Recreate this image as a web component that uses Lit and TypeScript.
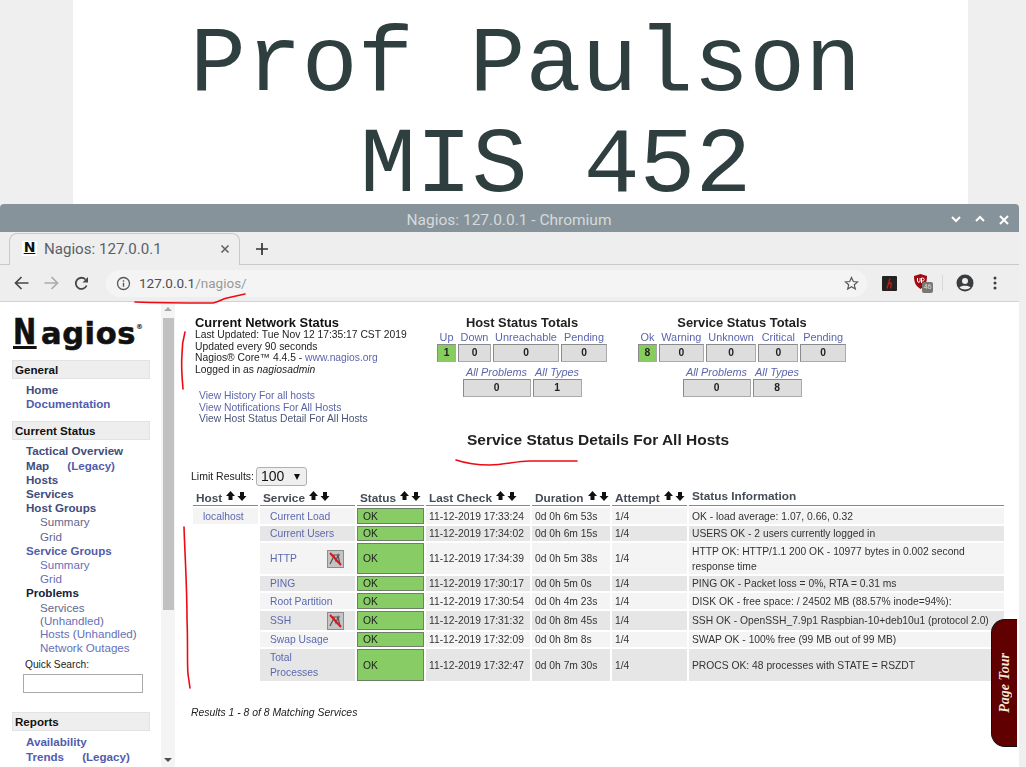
import {LitElement, css, html, svg} from 'lit';
import {customElement} from 'lit/decorators.js';

interface ServiceRow {
  name: string;
  h: number;
  check: string;
  duration: string;
  info: string;
  noted?: boolean;
}

const ROWS: ServiceRow[] = [
  {name: 'Current Load', h: 16, check: '17:33:24', duration: '0d 0h 6m 53s', info: 'OK - load average: 1.07, 0.66, 0.32'},
  {name: 'Current Users', h: 15, check: '17:34:02', duration: '0d 0h 6m 15s', info: 'USERS OK - 2 users currently logged in'},
  {name: 'HTTP', h: 31, check: '17:34:39', duration: '0d 0h 5m 38s', info: 'HTTP OK: HTTP/1.1 200 OK - 10977 bytes in 0.002 second response time', noted: true},
  {name: 'PING', h: 15, check: '17:30:17', duration: '0d 0h 5m 0s', info: 'PING OK - Packet loss = 0%, RTA = 0.31 ms'},
  {name: 'Root Partition', h: 16, check: '17:30:54', duration: '0d 0h 4m 23s', info: 'DISK OK - free space: / 24502 MB (88.57% inode=94%):'},
  {name: 'SSH', h: 19, check: '17:31:32', duration: '0d 0h 8m 45s', info: 'SSH OK - OpenSSH_7.9p1 Raspbian-10+deb10u1 (protocol 2.0)', noted: true},
  {name: 'Swap Usage', h: 15, check: '17:32:09', duration: '0d 0h 8m 8s', info: 'SWAP OK - 100% free (99 MB out of 99 MB)'},
  {name: 'Total Processes', h: 32, check: '17:32:47', duration: '0d 0h 7m 30s', info: 'PROCS OK: 48 processes with STATE = RSZDT'},
];

const sortArrows = html`<svg class="sort" width="21" height="10" viewBox="0 0 21 10">
  <path d="M4.5 0 9 5H6.5v4h-4V5H0z" fill="#111"/>
  <path d="M12 1h4v4h2.5L14 10 9.5 5H12z" fill="#111" transform="translate(2 0)"/>
</svg>`;

const noteIcon = html`<svg class="note" width="17" height="18" viewBox="0 0 17 18">
  <rect x=".5" y=".5" width="16" height="17" fill="#c4c4c4" stroke="#8c8c8c"/>
  <path d="M3 14 7 6l2 5 2-6 2 9M4 5h9" fill="none" stroke="#555" stroke-width="1.2"/>
  <path d="M3 3l11 12" stroke="#e0141c" stroke-width="2"/>
</svg>`;

const strokes = svg`
  <g fill="none" stroke="#ee0a14" stroke-width="1.6" stroke-linecap="round" stroke-linejoin="round">
    <path d="M135 302c25 1 55 1 78 1 6-1 9-4 14-5l18-4"/>
    <path d="M185 332c-2 7-3 14-3 22-1 12 0 24 1 35"/>
    <path d="M456 460c12 4 22 5 34 5 14 0 26-4 40-4l47 0"/>
    <path d="M184 527c1 30 3 60 3 92 1 25 0 45 1 55l2 14"/>
  </g>`;

@customElement('app-root')
export class AppRoot extends LitElement {
  static styles = css`
    :host {
      display: block;
      position: relative;
      width: 1026px;
      height: 767px;
      overflow: hidden;
      background: #efefef;
      font-family: 'Liberation Sans', Arial, sans-serif;
    }
    .slide {
      width: 895px;
      height: 204px;
      margin-left: 73px;
      background: #fff;
      overflow: hidden;
      font-family: 'Liberation Mono', monospace;
      font-size: 93.2px;
      line-height: 76px;
      color: #2f3e3f;
    }
    .slide-one { padding: 27px 0 25px 117px; }
    .slide-two { padding-left: 287px; }
    .window {
      width: 1019px;
      height: 563px;
      display: flex;
      flex-direction: column;
      border-radius: 4px 4px 0 0;
      background: #eee;
      overflow: hidden;
      font-family: Roboto, sans-serif;
      filter: blur(.3px);
    }
    .titlebar {
      height: 28px;
      flex: none;
      box-sizing: border-box;
      display: flex;
      align-items: center;
      justify-content: center;
      position: relative;
      background: #87939a;
      color: #d5dadc;
      font-size: 15.5px;
      padding: 3px 1px 0 0;
    }
    .winctl {
      position: absolute;
      right: 10px;
      top: 11px;
      display: flex;
      gap: 14px;
    }
    .tabstrip {
      height: 33px;
      flex: none;
      display: flex;
      align-items: flex-end;
      box-sizing: border-box;
      padding-left: 9px;
      background: linear-gradient(#eee 32px, #c9c9c9 32px);
    }
    .tab {
      width: 231px;
      height: 32px;
      box-sizing: border-box;
      display: flex;
      align-items: center;
      gap: 7px;
      padding: 0 9px 2px 12px;
      background: #eee;
      border: 1px solid #c9c9c9;
      border-bottom: none;
      border-radius: 8px 8px 0 0;
      color: #5c6166;
      font-size: 15.1px;
    }
    .favicon {
      width: 15px;
      height: 15px;
      flex: none;
      background: #fff;
      color: #111;
      font: 700 14px/13px 'DejaVu Sans', sans-serif;
      text-align: center;
      text-decoration: underline;
    }
    .tab-title { flex: 1; }
    .plus { margin: 0 0 10px 16px; }
    .toolbar {
      height: 37px;
      flex: none;
      display: flex;
      align-items: center;
      box-sizing: border-box;
      border-bottom: 1px solid #d2d2d2;
      padding-left: 14px;
    }
    .nav { display: flex; gap: 15px; align-items: center; }
    .omnibox {
      width: 761px;
      height: 27px;
      margin-left: 17px;
      box-sizing: border-box;
      display: flex;
      align-items: center;
      padding: 0 8px 0 10px;
      background: #f4f4f4;
      border-radius: 14px;
      font-size: 13.5px;
      color: #4a4f54;
    }
    .url-path { color: #999; }
    .omnibox .grow { flex: 1; margin-left: 8px; }
    .exts { display: flex; align-items: center; margin-left: 15px; }
    .ext-sep { width: 1px; height: 16px; background: #d8d8d8; margin: 0 13px 0 9px; }
    .ublock { position: relative; width: 20px; height: 20px; margin-left: 16px; }
    .ublock span {
      position: absolute;
      left: 9px;
      top: 9px;
      width: 11px;
      height: 11px;
      border-radius: 2px;
      background: #777;
      color: #ddd;
      font: 7px/11px Roboto, sans-serif;
      text-align: center;
    }
    .dots { margin-left: 19px; }
    .page {
      flex: 1;
      display: flex;
      min-height: 0;
      background: #fff;
    }
    .sidebar {
      width: 161px;
      flex: none;
      box-sizing: border-box;
      padding: 13px 0 0 12px;
      overflow: hidden;
      font-family: 'Liberation Sans', Arial, sans-serif;
      font-size: 11.6px;
      line-height: 14.2px;
    }
    .logo {
      height: 45px;
      box-sizing: border-box;
      color: #111;
      font: 700 30.5px/34px 'DejaVu Sans', sans-serif;
      letter-spacing: .6px;
      -webkit-text-stroke: .6px #111;
      margin-left: 1px;
      white-space: nowrap;
    }
    .logo u {
      display: inline-block;
      width: 28px;
      font-size: 36px;
      transform: scaleX(.77);
      transform-origin: left;
      text-underline-offset: 2px;
      text-decoration-thickness: 3px;
    }
    .logo sup { font-size: 7px; line-height: 0; letter-spacing: 0; -webkit-text-stroke: 0; vertical-align: 15px; }
    .side-head {
      width: 138px;
      height: 19px;
      box-sizing: border-box;
      padding-left: 2px;
      background: #eee;
      border: 1px solid #e2e2e2;
      color: #111;
      font-weight: 700;
      line-height: 18px;
      margin-bottom: 4px;
    }
    .side-list { margin-bottom: 10px; }
    .item { padding-left: 14px; font-weight: 700; color: #414c7c; white-space: pre; }
    .item.fresh { color: #515cae; }
    .item.black { color: #14203a; }
    .legacy { margin-left: 2px; }
    .sub { padding-left: 28px; color: #5f678f; }
    .sub.fresh, .fresh-link { color: #6670b8; }
    .sub.tight { line-height: 13.4px; }
    .item .fresh-link { font-weight: 700; color: #515cae; }
    .search-label { display: block; margin: 4px 0 2px 13px; color: #222; font-size: 10.2px; }
    .search {
      display: block;
      width: 120px;
      height: 19px;
      margin: 0 0 19px 11px;
      box-sizing: border-box;
      border: 1px solid #aaa;
      background: #fff;
    }
    .scrollbar {
      width: 14px;
      flex: none;
      display: flex;
      flex-direction: column;
      align-items: center;
      background: #f4f4f4;
    }
    .thumb {
      width: 11px;
      height: 292px;
      margin: 7px 0 auto;
      background: #c1c1c1;
    }
    .arrow { width: 0; height: 0; border: 4px solid transparent; }
    .arrow.up { border-bottom-color: #a8a8a8; border-top: none; margin-top: 5px; }
    .arrow.down { border-top-color: #505050; border-bottom: none; margin-bottom: 5px; }
    .main {
      flex: 1;
      min-width: 0;
      box-sizing: border-box;
      padding: 14px 0 0 16px;
      font-family: 'Liberation Sans', Arial, sans-serif;
      font-size: 10.3px;
      color: #222;
    }
    .main-top { display: flex; height: 116px; }
    .net { width: 246px; flex: none; padding-left: 4px; box-sizing: border-box; line-height: 11.7px; }
    .net-title { font-size: 12.9px; font-weight: 700; line-height: 13px; color: #111; }
    .net a, .links a { color: #5c65ab; }
    .links { margin: 14px 0 0 4px; line-height: 11.7px; }
    .links .dark { color: #4a5478; }
    .totals { flex: none; display: flex; flex-direction: column; align-items: center; }
    .totals.host { width: 170px; }
    .totals.service { width: 208px; margin-left: 31px; }
    .totals-title { font-size: 12.9px; font-weight: 700; line-height: 14px; color: #222; }
    .total-row { display: flex; gap: 2px; width: 100%; justify-content: center; }
    .total-cell { display: flex; flex-direction: column; align-items: stretch; }
    .total-cell .label {
      height: 14px;
      line-height: 14px;
      text-align: center;
      color: #5c65ab;
      white-space: nowrap;
      font-size: 10.9px;
    }
    .total-row.second { margin-top: 3px; }
    .total-row.second .label { font-style: italic; height: 14px; line-height: 14px; }
    .total-box {
      height: 18px;
      box-sizing: border-box;
      border: 1px solid #888;
      border-color: #8a8a8a #aaa #aaa #8a8a8a;
      background: #ddd;
      text-align: center;
      font-weight: 700;
      line-height: 16px;
      color: #222;
    }
    .total-box.good { background: #88cc5f; }
    .details-title {
      text-align: center;
      font-size: 15.5px;
      font-weight: 700;
      color: #222;
      width: 814px;
      line-height: 16px;
      margin-bottom: 19px;
    }
    .limit { display: flex; align-items: flex-start; gap: 2px; height: 21px; font-size: 10.5px; line-height: 19px; }
    .select {
      width: 51px;
      height: 19px;
      box-sizing: border-box;
      display: flex;
      align-items: center;
      justify-content: space-between;
      padding: 0 6px 0 4px;
      background: #efefef;
      border: 1px solid #b0b0b0;
      border-radius: 3px;
      color: #111;
      font-size: 14px;
    }
    .select i { width: 0; height: 0; border: 3.5px solid transparent; border-top: 6px solid #111; border-bottom: none; }
    table { border-collapse: separate; border-spacing: 2px; table-layout: fixed; width: 815px; }
    th {
      height: 16px;
      padding: 0 0 0 3px;
      box-sizing: border-box;
      border-bottom: 1px solid #888;
      text-align: left;
      white-space: nowrap;
      font-size: 11.8px;
      font-weight: 700;
      color: #444c55;
    }
    th.info-head { vertical-align: top; line-height: 13px; }
    .sort { margin-left: 4px; vertical-align: 1px; }
    td { padding: 0 0 0 3px; line-height: 15px; color: #333; font-size: 10.3px; }
    tr.odd td.fill { background: #f4f4f4; }
    tr.even td.fill { background: #e6e6e6; }
    td.host { padding-left: 10px; }
    td a { color: #5c68b0; }
    td.service { padding-left: 10px; }
    .service-box { display: flex; align-items: center; justify-content: space-between; padding-right: 11px; }
    .service-name { width: 66px; }
    td.ok {
      padding-left: 5px;
      background: #88cc66;
      border: 1px solid #6d7f66;
      box-sizing: border-box;
      color: #222;
      line-height: 13px;
    }
    .note { display: block; }
    .results { margin: 24px 0 0 0; font-style: italic; font-size: 10.4px; color: #222; }
    .page-tour {
      position: absolute;
      left: 991px;
      top: 619px;
      width: 26px;
      height: 128px;
      box-sizing: border-box;
      border: 1px solid #111;
      border-right: none;
      border-radius: 14px 0 0 14px;
      background: #600000;
      display: flex;
      align-items: center;
      justify-content: center;
      color: #f4e8d8;
      font: italic 700 14px 'Liberation Serif', serif;
    }
    .page-tour span { writing-mode: vertical-rl; transform: rotate(180deg); }
    .pen { position: absolute; left: 0; top: 0; pointer-events: none; }
    a { text-decoration: none; }
  `;

  private renderTotals(cls: string, title: string, top: [string, string, number][], bottom: [string, string, number][]) {
    const cell = (c: [string, string, number], good: boolean) => html`
      <div class="total-cell" style="width:${c[2]}px">
        <div class="label">${c[0]}</div>
        <div class="total-box ${good ? 'good' : ''}">${c[1]}</div>
      </div>`;
    return html`
      <div class="totals ${cls}">
        <div class="totals-title">${title}</div>
        <div class="total-row">${top.map((c, i) => cell(c, i === 0))}</div>
        <div class="total-row second">${bottom.map((c) => cell(c, false))}</div>
      </div>`;
  }

  private renderSidebar() {
    return html`
      <nav class="sidebar">
        <div class="logo"><u>N</u>agios<sup>®</sup></div>
        <div class="side-head">General</div>
        <div class="side-list">
          <div class="item">Home</div>
          <div class="item fresh">Documentation</div>
        </div>
        <div class="side-head">Current Status</div>
        <div>
          <div class="item">Tactical Overview</div>
          <div class="item">Map     <span class="fresh-link legacy">(Legacy)</span></div>
          <div class="item">Hosts</div>
          <div class="item">Services</div>
          <div class="item">Host Groups</div>
          <div class="sub">Summary</div>
          <div class="sub">Grid</div>
          <div class="item fresh">Service Groups</div>
          <div class="sub fresh">Summary</div>
          <div class="sub fresh">Grid</div>
          <div class="item black">Problems</div>
          <div class="sub tight">Services</div>
          <div class="sub tight">(<span class="fresh-link">Unhandled</span>)</div>
          <div class="sub tight"><span class="fresh-link">Hosts</span> (<span class="fresh-link">Unhandled</span>)</div>
          <div class="sub tight fresh">Network Outages</div>
        </div>
        <label class="search-label">Quick Search:</label>
        <input class="search" type="text" />
        <div class="side-head">Reports</div>
        <div>
          <div class="item fresh">Availability</div>
          <div class="item fresh">Trends     <span class="legacy">(Legacy)</span></div>
          <div class="item fresh">Alerts</div>
        </div>
      </nav>`;
  }

  private renderTable() {
    const heads = ['Host', 'Service', 'Status', 'Last Check', 'Duration', 'Attempt'];
    return html`
      <table>
        <colgroup>
          ${[65, 95, 67, 104, 78, 75, 315].map((w) => html`<col style="width:${w}px" />`)}
        </colgroup>
        <thead>
          <tr>
            ${heads.map((h) => html`<th>${h}${sortArrows}</th>`)}
            <th class="info-head">Status Information</th>
          </tr>
        </thead>
        <tbody>
          ${ROWS.map((r, i) => html`
            <tr class=${i % 2 ? 'even' : 'odd'} style="height:${r.h}px">
              ${i === 0
                ? html`<td class="host fill"><a>localhost</a></td>`
                : html`<td class="host"></td>`}
              <td class="service fill">
                <div class="service-box">
                  <a class=${r.noted ? '' : 'service-name'}>${r.name}</a>
                  ${r.noted ? noteIcon : ''}
                </div>
              </td>
              <td class="ok">OK</td>
              <td class="fill">11-12-2019 ${r.check}</td>
              <td class="fill">${r.duration}</td>
              <td class="fill">1/4</td>
              <td class="fill">${r.info}</td>
            </tr>`)}
        </tbody>
      </table>`;
  }

  render() {
    return html`
      <div class="slide">
        <div class="slide-one">Prof Paulson</div>
        <div class="slide-two">MIS 452</div>
      </div>
      <div class="window">
        <div class="titlebar">
          Nagios: 127.0.0.1 - Chromium
          <div class="winctl">
            <svg width="10" height="8" viewBox="0 0 10 8"><path d="M1 2l4 4 4-4" fill="none" stroke="#fff" stroke-width="2"/></svg>
            <svg width="10" height="8" viewBox="0 0 10 8"><path d="M1 6l4-4 4 4" fill="none" stroke="#fff" stroke-width="2"/></svg>
            <svg width="10" height="10" viewBox="0 0 10 10"><path d="M1 1l8 8M9 1l-8 8" fill="none" stroke="#fff" stroke-width="2"/></svg>
          </div>
        </div>
        <div class="tabstrip">
          <div class="tab">
            <span class="favicon">N</span>
            <span class="tab-title">Nagios: 127.0.0.1</span>
            <svg width="10" height="10" viewBox="0 0 10 10"><path d="M1.5 1.5l7 7M8.5 1.5l-7 7" stroke="#5f6368" stroke-width="1.6"/></svg>
          </div>
          <svg class="plus" width="12" height="12" viewBox="0 0 12 12"><path d="M6 0v12M0 6h12" stroke="#333" stroke-width="1.7"/></svg>
        </div>
        <div class="toolbar">
          <div class="nav">
            <svg width="15" height="14" viewBox="0 0 15 14"><path d="M14.500 7H2M7.500 1 1.500 7l6 6" fill="none" stroke="#44484c" stroke-width="1.7"/></svg>
            <svg width="15" height="14" viewBox="0 0 15 14"><path d="M.5 7H13M7.500 1l6 6-6 6" fill="none" stroke="#a9abad" stroke-width="1.7"/></svg>
            <svg width="15" height="15" viewBox="0 0 15 15"><path d="M12.600 9.500A5.600 5.600 0 1 1 11.500 3.500" fill="none" stroke="#44484c" stroke-width="1.800"/><path d="M14 1v5.500H8.500z" fill="#44484c"/></svg>
          </div>
          <div class="omnibox">
            <svg width="15" height="15" viewBox="0 0 15 15"><circle cx="7.500" cy="7.500" r="6" fill="none" stroke="#55595d" stroke-width="1.300"/><path d="M7.500 6.800v4M7.500 4.200v1.500" stroke="#55595d" stroke-width="1.400"/></svg>
            <span class="grow">127.0.0.1<span class="url-path">/nagios/</span></span>
            <svg width="15" height="15" viewBox="0 0 15 15"><path d="M7.500 1.500l1.800 4 4.300.4-3.300 2.900 1 4.200-3.800-2.300-3.800 2.300 1-4.200L1.400 5.900l4.300-.4z" fill="none" stroke="#55595d" stroke-width="1.200"/></svg>
          </div>
          <div class="exts">
            <svg width="15" height="15" viewBox="0 0 15 15"><rect width="15" height="15" rx="1" fill="#222"/><path d="M8 2.500 5 12.500M5.800 9.500c1-2.500 3.500-3.500 3.500-1.500l-.8 4.500" fill="none" stroke="#c41a1a" stroke-width="1.400"/></svg>
            <div class="ublock">
              <svg width="15" height="17" viewBox="0 0 15 17"><path d="M7.500 1 14 3c0 6-1.500 10-6.500 13C2.500 13 1 9 1 3z" fill="#9c0d12"/><path d="M4.500 5v3a1.300 1.300 0 0 0 2.600 0V5M8.500 10V5h1.200a1.400 1.400 0 0 1 0 3H8.500" fill="none" stroke="#fff" stroke-width="1"/></svg>
              <span>46</span>
            </div>
            <div class="ext-sep"></div>
            <svg width="18" height="18" viewBox="0 0 18 18"><circle cx="9" cy="9" r="8.500" fill="#3a3d40"/><circle cx="9" cy="7" r="3" fill="#eee"/><path d="M3.500 13.500c1.500-2.500 9.500-2.500 11 0-2.500 2.500-8.500 2.500-11 0z" fill="#eee"/></svg>
            <svg class="dots" width="4" height="14" viewBox="0 0 4 14"><circle cx="2" cy="2" r="1.500" fill="#3a3d40"/><circle cx="2" cy="7" r="1.500" fill="#3a3d40"/><circle cx="2" cy="12" r="1.500" fill="#3a3d40"/></svg>
          </div>
        </div>
        <div class="page">
          ${this.renderSidebar()}
          <div class="scrollbar">
            <div class="arrow up"></div>
            <div class="thumb"></div>
            <div class="arrow down"></div>
          </div>
          <div class="main">
            <div class="main-top">
              <div class="net">
                <div class="net-title">Current Network Status</div>
                Last Updated: Tue Nov 12 17:35:17 CST 2019<br />
                Updated every 90 seconds<br />
                Nagios® Core™ 4.4.5 - <a>www.nagios.org</a><br />
                Logged in as <i>nagiosadmin</i>
                <div class="links">
                  <a>View History For all hosts</a><br />
                  <a>View Notifications For All Hosts</a><br />
                  <a class="dark">View Host Status Detail For All Hosts</a>
                </div>
              </div>
              ${this.renderTotals('host', 'Host Status Totals',
                [['Up', '1', 19], ['Down', '0', 33], ['Unreachable', '0', 66], ['Pending', '0', 46]],
                [['All Problems', '0', 68], ['All Types', '1', 49]])}
              ${this.renderTotals('service', 'Service Status Totals',
                [['Ok', '8', 19], ['Warning', '0', 45], ['Unknown', '0', 51], ['Critical', '0', 40], ['Pending', '0', 46]],
                [['All Problems', '0', 68], ['All Types', '8', 49]])}
            </div>
            <div class="details-title">Service Status Details For All Hosts</div>
            <div class="limit">Limit Results: <div class="select">100<i></i></div></div>
            ${this.renderTable()}
            <div class="results">Results 1 - 8 of 8 Matching Services</div>
          </div>
        </div>
      </div>
      <div class="page-tour"><span>Page Tour</span></div>
      <svg class="pen" width="1026" height="767">${strokes}</svg>
    `;
  }
}
